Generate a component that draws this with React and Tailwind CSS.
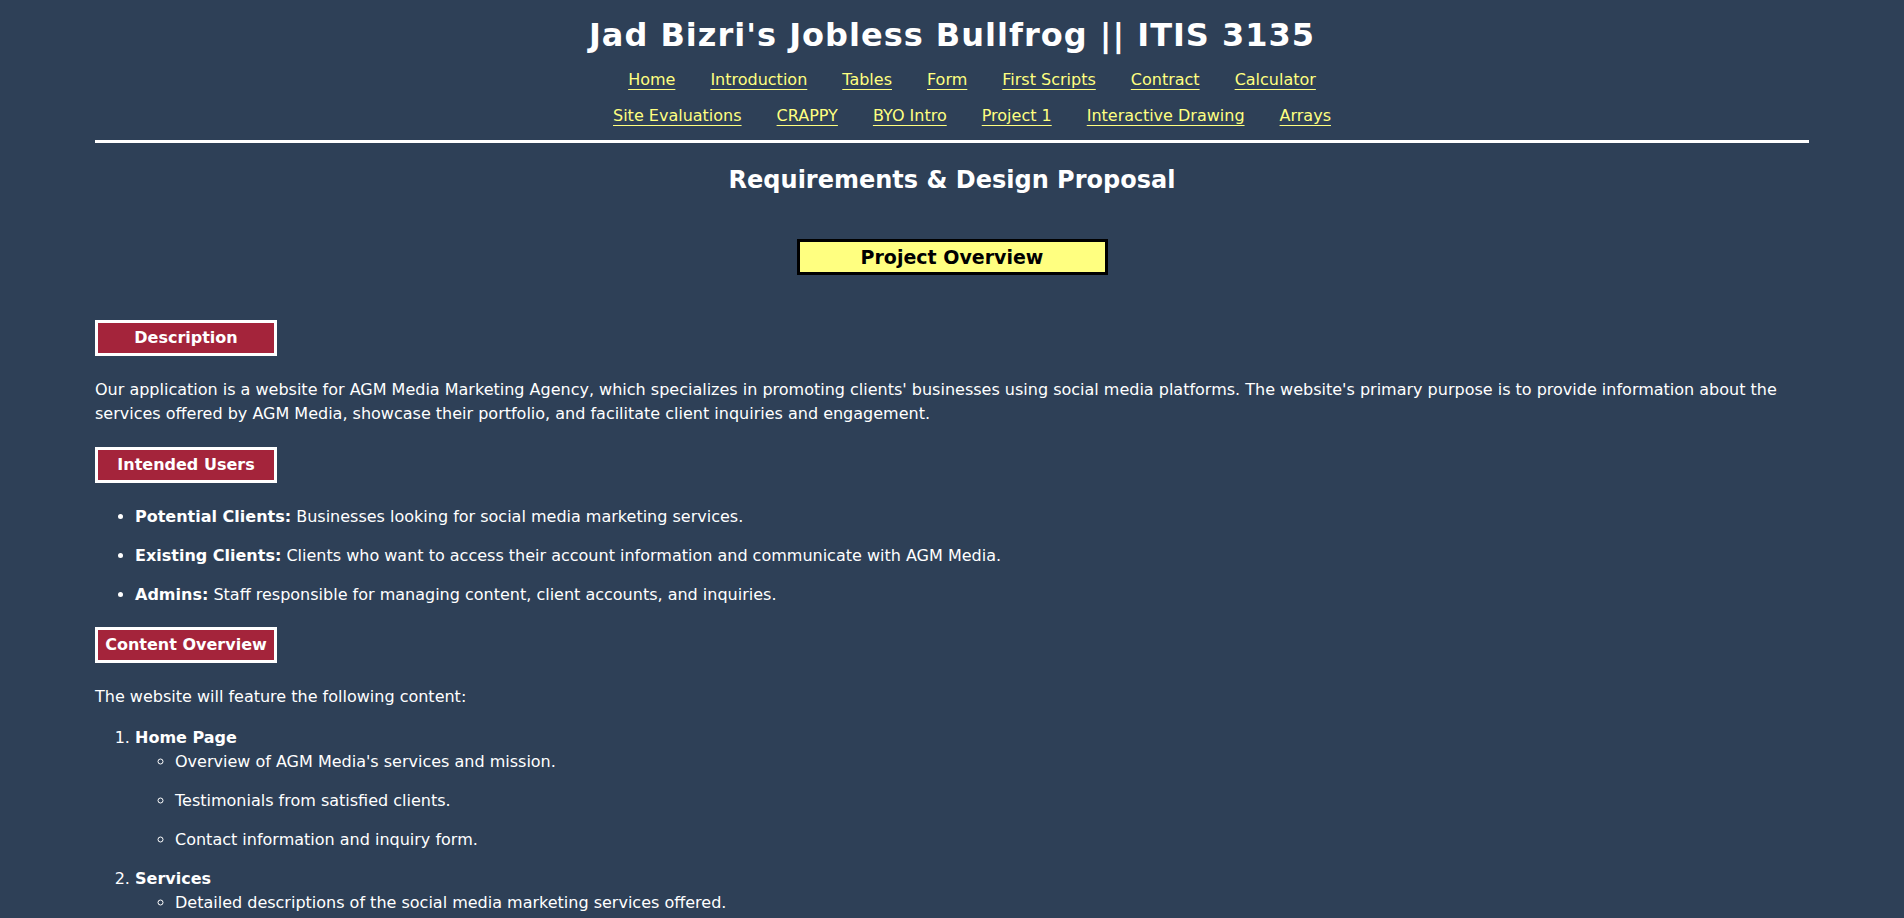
const navTop = ['Home', 'Introduction', 'Tables', 'Form', 'First Scripts', 'Contract', 'Calculator'];
const navBottom = ['Site Evaluations', 'CRAPPY', 'BYO Intro', 'Project 1', 'Interactive Drawing', 'Arrays'];

const users = [
  { label: 'Potential Clients:', text: 'Businesses looking for social media marketing services.' },
  { label: 'Existing Clients:', text: 'Clients who want to access their account information and communicate with AGM Media.' },
  { label: 'Admins:', text: 'Staff responsible for managing content, client accounts, and inquiries.' },
];

const pages = [
  {
    title: 'Home Page',
    items: [
      "Overview of AGM Media's services and mission.",
      'Testimonials from satisfied clients.',
      'Contact information and inquiry form.',
    ],
  },
  {
    title: 'Services',
    items: [
      'Detailed descriptions of the social media marketing services offered.',
      'Pricing information and packages.',
    ],
  },
  {
    title: 'Portfolio',
    items: [
      'Showcase of past projects and campaigns.',
      'Case studies with measurable results.',
    ],
  },
];

const SectionLabel = ({ children }) => (
  <div className="w-[182px] h-[36px] border-[3px] border-white bg-[#a4243b] flex items-center justify-center text-[16px] font-bold text-white">
    {children}
  </div>
);

const NavRow = ({ links }) => (
  <ul className="flex justify-center gap-[35px] h-[36px] items-center pl-[40px]">
    {links.map((link) => (
      <li key={link}>
        <a href="#" className="text-[#ffff80] text-[16px] underline underline-offset-[4px] decoration-1">
          {link}
        </a>
      </li>
    ))}
  </ul>
);

export default function App() {
  return (
    <div className="min-h-screen bg-[#2e4057] text-white font-['DejaVu_Sans',sans-serif] text-[16px]">
      {/* Header */}
      <header className="text-center pt-[15px]">
        <h1 className="text-[32px] leading-[40px] font-bold tracking-[1px]">Jad Bizri's Jobless Bullfrog || ITIS 3135</h1>
        <nav className="mt-[7px]">
          <NavRow links={navTop} />
          <NavRow links={navBottom} />
        </nav>
      </header>

      <main className="mx-[95px] pb-10">
        <hr className="mt-[6px] h-[3px] bg-white border-0" />

        <h2 className="text-center text-[24px] font-bold leading-[30px] mt-[22px]">
          Requirements &amp; Design Proposal
        </h2>

        <div className="flex justify-center mt-[44px]">
          <div className="w-[311px] h-[36px] border-[3px] border-black bg-[#ffff80] text-black text-[19px] font-bold flex items-center justify-center">
            Project Overview
          </div>
        </div>

        {/* Description */}
        <div className="mt-[45px]">
          <SectionLabel>Description</SectionLabel>
        </div>
        <p className="leading-[24px] mt-[22px]">
          Our application is a website for AGM Media Marketing Agency, which specializes in promoting clients'
          businesses using social media platforms. The website's primary purpose is to provide information about the
          services offered by AGM Media, showcase their portfolio, and facilitate client inquiries and engagement.
        </p>

        {/* Intended Users */}
        <div className="mt-[21px]">
          <SectionLabel>Intended Users</SectionLabel>
        </div>
        <ul className="list-disc pl-[40px] mt-[22px]">
          {users.map((u) => (
            <li key={u.label} className="leading-[24px] mb-[15px]">
              <strong className="font-bold">{u.label}</strong> {u.text}
            </li>
          ))}
        </ul>

        {/* Content Overview */}
        <div className="mt-[20px]">
          <SectionLabel>Content Overview</SectionLabel>
        </div>
        <p className="leading-[24px] mt-[22px]">The website will feature the following content:</p>
        <ol className="list-decimal pl-[40px] mt-[17px]">
          {pages.map((page) => (
            <li key={page.title} className="leading-[24px] mb-[15px]">
              <strong className="font-bold">{page.title}</strong>
              <ul className="list-[circle] pl-[40px]">
                {page.items.map((item) => (
                  <li key={item} className="mb-[15px] last:mb-0">
                    {item}
                  </li>
                ))}
              </ul>
            </li>
          ))}
        </ol>
      </main>
    </div>
  );
}
